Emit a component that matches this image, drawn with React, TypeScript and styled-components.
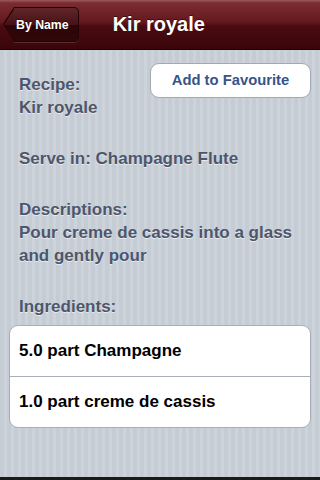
import React from "react";
import styled, { createGlobalStyle } from "styled-components";

const GlobalStyle = createGlobalStyle`
  html, body {
    margin: 0;
    padding: 0;
    width: 320px;
    height: 480px;
    overflow: hidden;
    font-family: "Liberation Sans", Arial, sans-serif;
  }
`;

const ingredients = ["5.0 part Champagne", "1.0 part creme de cassis"];

export default function App() {
  return (
    <Screen>
      <GlobalStyle />
      <NavBar>
        <BackButton>By Name</BackButton>
        <NavTitle>Kir royale</NavTitle>
      </NavBar>
      <Content>
        <TopRow>
          <Block $top={10}>
            <Label>Recipe:</Label>
            <Label>Kir royale</Label>
          </Block>
          <FavButton>Add to Favourite</FavButton>
        </TopRow>
        <Block $top={28}>
          <Label>Serve in: Champagne Flute</Label>
        </Block>
        <Block $top={28}>
          <Label>Descriptions:</Label>
          <Label>Pour creme de cassis into a glass</Label>
          <Label>and gently pour</Label>
        </Block>
        <Block $top={28}>
          <Label>Ingredients:</Label>
        </Block>
        <Group>
          {ingredients.map((item, i) => (
            <Cell key={item} $first={i === 0}>
              {item}
            </Cell>
          ))}
        </Group>
      </Content>
      <BottomEdge />
    </Screen>
  );
}

const Screen = styled.div`
  width: 320px;
  height: 480px;
  display: flex;
  flex-direction: column;
  background: repeating-linear-gradient(
    90deg,
    #c5ccd4 0px,
    #c5ccd4 4px,
    #cdd3da 4px,
    #cdd3da 7px
  );
`;

const NavBar = styled.div`
  height: 50px;
  flex-shrink: 0;
  display: flex;
  align-items: center;
  padding-left: 4px;
  box-sizing: border-box;
  border-bottom: 1px solid #1a0204;
  background: linear-gradient(
    to bottom,
    #9c5a5e 0px,
    #7a2c31 3px,
    #64191e 22px,
    #4a0b10 26px,
    #3a060a 49px
  );
`;

const backFill = "linear-gradient(to bottom, #62262a 0%, #461216 50%, #2c0508 51%, #300709 100%)";

const BackButton = styled.div`
  position: relative;
  height: 33px;
  margin-left: 10px;
  padding: 0 9px 0 2px;
  display: flex;
  align-items: center;
  border: 1px solid #240104;
  border-left: none;
  border-radius: 0 5px 5px 0;
  background: ${backFill};
  box-shadow: 0 1px 0 rgba(255, 255, 255, 0.15);
  color: #fff;
  font-weight: bold;
  font-size: 12.3px;
  text-shadow: 0 -1px 0 rgba(0, 0, 0, 0.5);

  &::before {
    content: "";
    position: absolute;
    left: -11px;
    top: -1px;
    width: 0;
    height: 0;
    border-top: 17.5px solid transparent;
    border-bottom: 17.5px solid transparent;
    border-right: 11px solid #240104;
  }

  &::after {
    content: "";
    position: absolute;
    left: -10px;
    top: 0;
    width: 11px;
    height: 33px;
    clip-path: polygon(100% 0, 0 50%, 100% 100%);
    background: ${backFill};
  }
`;

const NavTitle = styled.div`
  margin-left: 34px;
  color: #fff;
  font-weight: bold;
  font-size: 20px;
  text-shadow: 0 -1px 0 rgba(0, 0, 0, 0.5);
`;

const Content = styled.div`
  flex: 1;
  display: flex;
  flex-direction: column;
  padding: 13px 9px 0 19px;
`;

const TopRow = styled.div`
  display: flex;
  justify-content: space-between;
  align-items: flex-start;
`;

const Block = styled.div<{ $top: number }>`
  display: flex;
  flex-direction: column;
  margin-top: ${(p) => p.$top}px;
`;

const Label = styled.div`
  color: #4c566c;
  font-weight: bold;
  font-size: 17px;
  line-height: 23px;
  text-shadow: 0 1px 0 rgba(255, 255, 255, 0.6);
`;

const FavButton = styled.button`
  width: 161px;
  height: 35px;
  border-radius: 9px;
  border: 1px solid #a3a9b3;
  background: #fff;
  color: #385487;
  font-family: "Liberation Sans", Arial, sans-serif;
  font-weight: bold;
  font-size: 14.8px;
  padding: 0 0 2px 0;
`;

const Group = styled.div`
  margin: 7px 0 0 -10px;
  background: #fff;
  border: 1px solid #a9afb8;
  border-radius: 9px;
  overflow: hidden;
`;

const Cell = styled.div<{ $first: boolean }>`
  height: 50px;
  display: flex;
  align-items: center;
  padding-left: 9px;
  border-top: ${(p) => (p.$first ? "none" : "1px solid #a9afb8")};
  color: #000;
  font-weight: bold;
  font-size: 17px;
`;

const BottomEdge = styled.div`
  margin-top: auto;
  height: 3px;
  flex-shrink: 0;
  background: #1a1a1a;
`;
